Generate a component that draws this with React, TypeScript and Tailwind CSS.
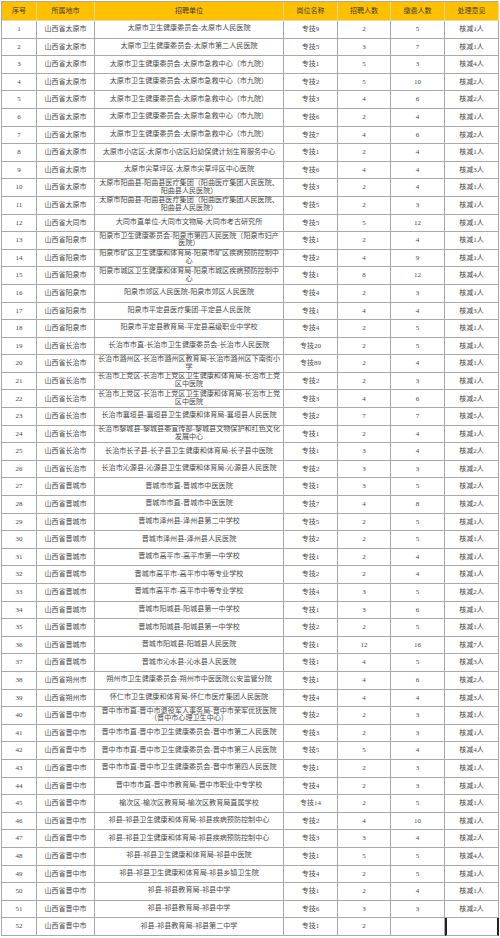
const TY = '山西省太原市';
const DT = '山西省大同市';
const YQ = '山西省阳泉市';
const CZ = '山西省长治市';
const JC = '山西省晋城市';
const SZ = '山西省朔州市';
const JZ = '山西省晋中市';

// [所属地市, 招聘单位, 岗位名称, 招聘人数, 缴费人数, 处理意见]
type Row = [string, string, string, string, string, string];

const rows: Row[] = [
  [TY, '太原市卫生健康委员会-太原市人民医院', '专技9', '2', '5', '核减1人'],
  [TY, '太原市卫生健康委员会-太原市第二人民医院', '专技5', '3', '7', '核减1人'],
  [TY, '太原市卫生健康委员会-太原市急救中心（市九院）', '专技1', '5', '3', '核减4人'],
  [TY, '太原市卫生健康委员会-太原市急救中心（市九院）', '专技2', '5', '10', '核减2人'],
  [TY, '太原市卫生健康委员会-太原市急救中心（市九院）', '专技3', '4', '6', '核减2人'],
  [TY, '太原市卫生健康委员会-太原市急救中心（市九院）', '专技6', '2', '4', '核减1人'],
  [TY, '太原市卫生健康委员会-太原市急救中心（市九院）', '专技7', '4', '6', '核减2人'],
  [TY, '太原市小店区-太原市小店区妇幼保健计划生育服务中心', '专技1', '2', '4', '核减1人'],
  [TY, '太原市尖草坪区-太原市尖草坪区中心医院', '专技6', '4', '4', '核减3人'],
  [TY, '太原市阳曲县-阳曲县医疗集团（阳曲医疗集团人民医院、\n阳曲县人民医院）', '专技3', '2', '4', '核减1人'],
  [TY, '太原市阳曲县-阳曲县医疗集团（阳曲医疗集团人民医院、\n阳曲县人民医院）', '专技5', '2', '3', '核减1人'],
  [DT, '大同市直单位-大同市文物局-大同市考古研究所', '专技5', '5', '12', '核减1人'],
  [YQ, '阳泉市卫生健康委员会-阳泉市第四人民医院（阳泉市妇产\n医院）', '专技1', '2', '4', '核减1人'],
  [YQ, '阳泉市矿区卫生健康和体育局-阳泉市矿区疾病预防控制中\n心', '专技2', '4', '9', '核减1人'],
  [YQ, '阳泉市城区卫生健康和体育局-阳泉市城区疾病预防控制中\n心', '专技1', '8', '12', '核减4人'],
  [YQ, '阳泉市郊区人民医院-阳泉市郊区人民医院', '专技4', '2', '3', '核减1人'],
  [YQ, '阳泉市平定县医疗集团-平定县人民医院', '专技1', '4', '4', '核减3人'],
  [YQ, '阳泉市平定县教育局-平定县高级职业中学校', '专技4', '2', '5', '核减1人'],
  [CZ, '长治市市直-长治市卫生健康委员会-长治市人民医院', '专技20', '2', '5', '核减1人'],
  [CZ, '长治市潞州区-长治市潞州区教育局-长治市潞州区下南街小\n学', '专技89', '2', '4', '核减1人'],
  [CZ, '长治市上党区-长治市上党区卫生健康和体育局-长治市上党\n区中医院', '专技2', '2', '3', '核减1人'],
  [CZ, '长治市上党区-长治市上党区卫生健康和体育局-长治市上党\n区中医院', '专技3', '4', '6', '核减2人'],
  [CZ, '长治市襄垣县-襄垣县卫生健康和体育局-襄垣县人民医院', '专技2', '7', '7', '核减5人'],
  [CZ, '长治市黎城县-黎城县委宣传部-黎城县文物保护和红色文化\n发展中心', '专技1', '2', '4', '核减1人'],
  [CZ, '长治市长子县-长子县卫生健康和体育局-长子县中医院', '专技1', '3', '4', '核减2人'],
  [CZ, '长治市沁源县-沁源县卫生健康和体育局-沁源县人民医院', '专技2', '3', '3', '核减2人'],
  [JC, '晋城市市直-晋城市中医医院', '专技1', '3', '5', '核减2人'],
  [JC, '晋城市市直-晋城市中医医院', '专技7', '4', '8', '核减2人'],
  [JC, '晋城市泽州县-泽州县第二中学校', '专技5', '2', '5', '核减1人'],
  [JC, '晋城市泽州县-泽州县人民医院', '专技2', '2', '5', '核减1人'],
  [JC, '晋城市高平市-高平市第一中学校', '专技1', '2', '4', '核减1人'],
  [JC, '晋城市高平市-高平市中等专业学校', '专技2', '2', '4', '核减1人'],
  [JC, '晋城市高平市-高平市中等专业学校', '专技4', '3', '5', '核减2人'],
  [JC, '晋城市阳城县-阳城县第一中学校', '专技1', '3', '6', '核减1人'],
  [JC, '晋城市阳城县-阳城县第一中学校', '专技2', '2', '5', '核减1人'],
  [JC, '晋城市阳城县-阳城县人民医院', '专技1', '12', '16', '核减7人'],
  [JC, '晋城市沁水县-沁水县人民医院', '专技1', '4', '5', '核减3人'],
  [SZ, '朔州市卫生健康委员会-朔州市中医医院公安监管分院', '专技1', '4', '6', '核减2人'],
  [SZ, '怀仁市卫生健康和体育局-怀仁市医疗集团人民医院', '专技4', '4', '4', '核减3人'],
  [JZ, '晋中市市直-晋中市退役军人事务局-晋中市荣军优抚医院\n（晋中市心理卫生中心）', '专技2', '2', '3', '核减1人'],
  [JZ, '晋中市市直-晋中市卫生健康委员会-晋中市第二人民医院', '专技3', '2', '3', '核减1人'],
  [JZ, '晋中市市直-晋中市卫生健康委员会-晋中市第三人民医院', '专技5', '5', '4', '核减4人'],
  [JZ, '晋中市市直-晋中市卫生健康委员会-晋中市第四人民医院', '专技1', '2', '3', '核减1人'],
  [JZ, '晋中市市直-晋中市教育局-晋中市职业中专学校', '专技4', '2', '3', '核减1人'],
  [JZ, '榆次区-榆次区教育局-榆次区教育局直属学校', '专技14', '2', '5', '核减1人'],
  [JZ, '祁县-祁县卫生健康和体育局-祁县疾病预防控制中心', '专技2', '4', '10', '核减1人'],
  [JZ, '祁县-祁县卫生健康和体育局-祁县疾病预防控制中心', '专技3', '3', '4', '核减2人'],
  [JZ, '祁县-祁县卫生健康和体育局-祁县中医院', '专技1', '5', '5', '核减4人'],
  [JZ, '祁县-祁县卫生健康和体育局-祁县乡镇卫生院', '专技4', '2', '5', '核减1人'],
  [JZ, '祁县-祁县教育局-祁县中学', '专技1', '2', '4', '核减1人'],
  [JZ, '祁县-祁县教育局-祁县中学', '专技6', '3', '3', '核减2人'],
  [JZ, '祁县-祁县教育局-祁县第二中学', '专技1', '2', '', ''],
];

const headers = ['序号', '所属地市', '招聘单位', '岗位名称', '招聘人数', '缴费人数', '处理意见'];

const cell = 'flex items-center justify-center text-center border-r border-b border-[#a9a9a9]';

export default function App() {
  return (
    <div className="min-h-[938px] w-[500px] bg-white pl-[1px] pt-[1px] font-['Liberation_Serif','Noto_Sans_CJK_SC',serif] text-[7px] text-[#4a4a4a]">
      <div className="w-[497px] border-l border-t border-[#a9a9a9]">
        {/* header */}
        <div className="grid h-[19px] grid-cols-[35px_58px_189px_54px_53px_54px_54px] bg-[#ffc000] text-[#3a3a3a]">
          {headers.map((h) => (
            <div key={h} className="flex items-center justify-center border-r border-b border-[#e9d9a0]">
              {h}
            </div>
          ))}
        </div>

        {rows.map((r, i) => {
          const last = i === rows.length - 1;
          return (
            <div key={i} className="grid h-[17.6px] grid-cols-[35px_58px_189px_54px_53px_54px_54px]">
              <div className={cell}>{i + 1}</div>
              <div className={cell}>{r[0]}</div>
              <div className={`${cell} whitespace-pre text-[7.1px] leading-[7.8px]`}>{r[1]}</div>
              <div className={cell}>{r[2]}</div>
              <div className={cell}>{r[3]}</div>
              <div className={cell}>{r[4]}</div>
              <div className={last ? `${cell} border-l-2 border-r-2 border-l-[#222] border-r-[#222]` : cell}>{r[5]}</div>
            </div>
          );
        })}
      </div>
    </div>
  );
}
